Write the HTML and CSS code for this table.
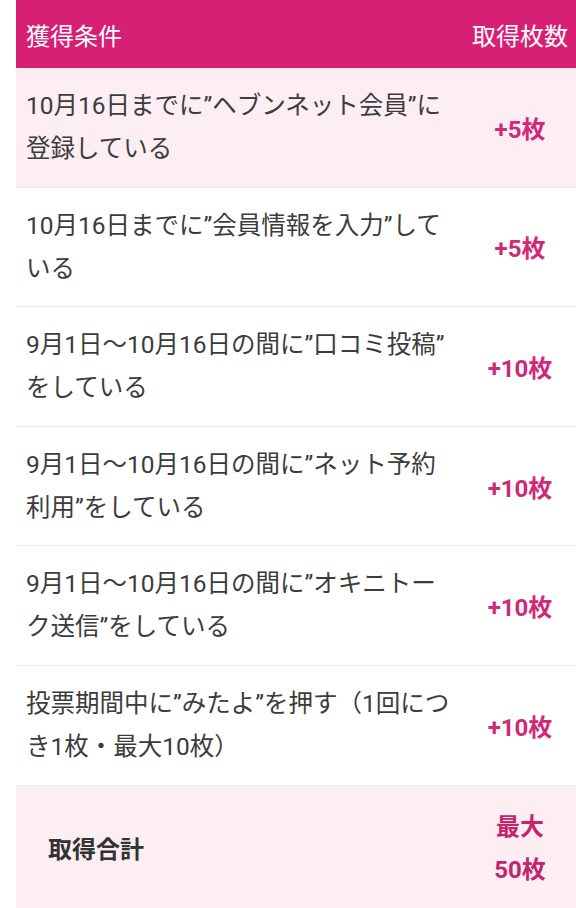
FILE: index.html
```html
<!DOCTYPE html>
<html lang="ja">
<head>
<meta charset="utf-8">
<link rel="stylesheet" href="styles.css">
</head>
<body>
<div class="wrap">
<table class="tbl">
  <thead>
    <tr>
      <th class="h-cond">獲得条件</th>
      <th class="h-num">取得枚数</th>
    </tr>
  </thead>
  <tbody>
    <tr class="pink">
      <td class="cond">10月16日までに”ヘブンネット会員”に登録している</td>
      <td class="num">+5枚</td>
    </tr>
    <tr>
      <td class="cond">10月16日までに”会員情報を入力”している</td>
      <td class="num">+5枚</td>
    </tr>
    <tr>
      <td class="cond">9月1日〜10月16日の間に”口コミ投稿”をしている</td>
      <td class="num">+10枚</td>
    </tr>
    <tr>
      <td class="cond">9月1日〜10月16日の間に”ネット予約利用”をしている</td>
      <td class="num">+10枚</td>
    </tr>
    <tr>
      <td class="cond">9月1日〜10月16日の間に”オキニトーク送信”をしている</td>
      <td class="num">+10枚</td>
    </tr>
    <tr>
      <td class="cond">投票期間中に”みたよ”を押す（1回につき1枚・最大10枚）</td>
      <td class="num">+10枚</td>
    </tr>
    <tr class="pink total">
      <th class="t-label">取得合計</th>
      <td class="num t-num">最大<br>50枚</td>
    </tr>
  </tbody>
</table>
</div>
</body>
</html>
```

FILE: styles.css
```css
html, body {
  margin: 0;
  padding: 0;
  background: #ffffff;
}
body {
  font-family: Roboto, "Noto Sans CJK JP", sans-serif;
  color: #3c3c3c;
}
.wrap {
  padding-left: 16px;
}
.tbl {
  width: 560px;
  border-collapse: collapse;
  table-layout: fixed;
}
.tbl th, .tbl td {
  vertical-align: middle;
}
.h-cond, .h-num {
  background: #d71f73;
  color: #ffffff;
  font-weight: normal;
  font-size: 24px;
  height: 68px;
  padding: 0;
  box-sizing: border-box;
}
.h-cond {
  text-align: left;
  padding-left: 10px;
  width: 448px;
}
.h-num {
  text-align: center;
}
tbody tr {
  border-bottom: 1px solid #ebebeb;
}
tbody tr.pink {
  background: #fdeef4;
}
.cond {
  font-size: 24.5px;
  line-height: 43px;
  padding: 16px 12px 16.6px 10px;
  text-align: left;
  line-break: anywhere;
}
.num {
  font-size: 24px;
  font-weight: bold;
  color: #d0297a;
  text-align: center;
  padding: 0;
}
.total {
  border-bottom: none;
}
.t-label {
  text-align: left;
  font-size: 24px;
  font-weight: bold;
  color: #333333;
  padding: 20px 10px 22px 32px;
}
.t-num {
  line-height: 43px;
  color: #c4246c;
  padding: 20px 0;
}
```
